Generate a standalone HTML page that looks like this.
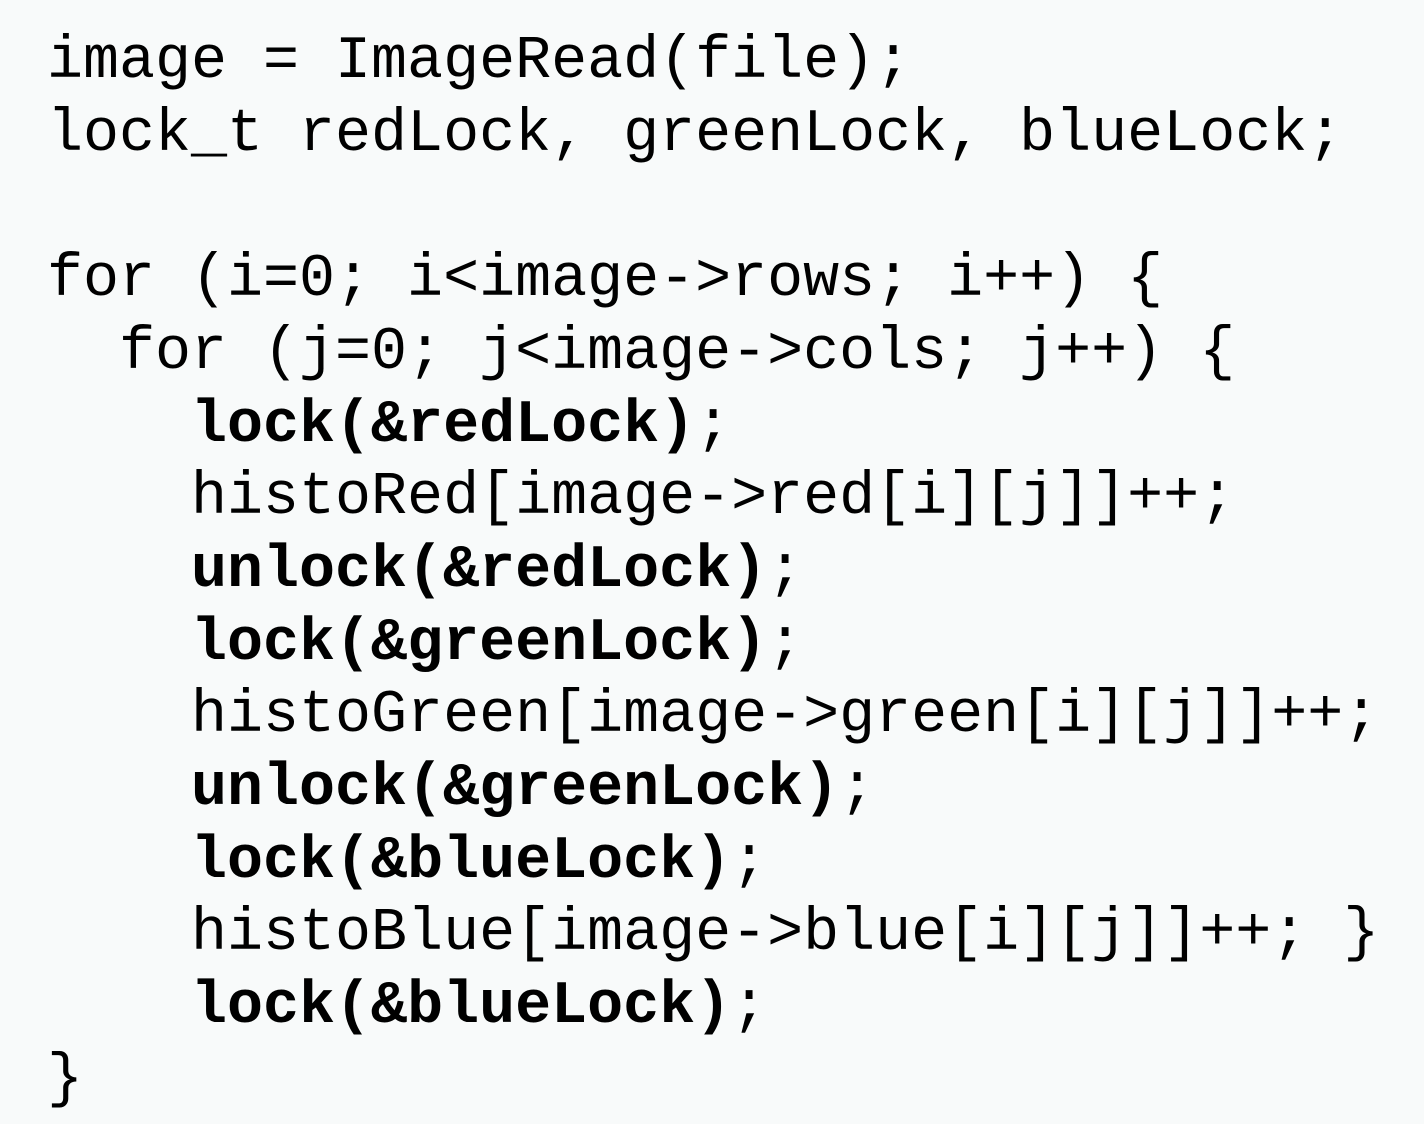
<!DOCTYPE html>
<html><head><meta charset="utf-8"><style>
html,body{margin:0;padding:0;width:1424px;height:1124px;background:#f8fafa;overflow:hidden}
pre{margin:0;position:absolute;left:47px;top:26px;font-family:"Liberation Mono",monospace;font-size:60px;line-height:72.7px;color:#000}
b{font-weight:bold}
</style></head><body><pre>image = ImageRead(file);
lock_t redLock, greenLock, blueLock;

for (i=0; i&lt;image-&gt;rows; i++) {
  for (j=0; j&lt;image-&gt;cols; j++) {
    <b>lock(&amp;redLock)</b>;
    histoRed[image-&gt;red[i][j]]++;
    <b>unlock(&amp;redLock)</b>;
    <b>lock(&amp;greenLock)</b>;
    histoGreen[image-&gt;green[i][j]]++;
    <b>unlock(&amp;greenLock)</b>;
    <b>lock(&amp;blueLock)</b>;
    histoBlue[image-&gt;blue[i][j]]++; }
    <b>lock(&amp;blueLock)</b>;
}</pre></body></html>
